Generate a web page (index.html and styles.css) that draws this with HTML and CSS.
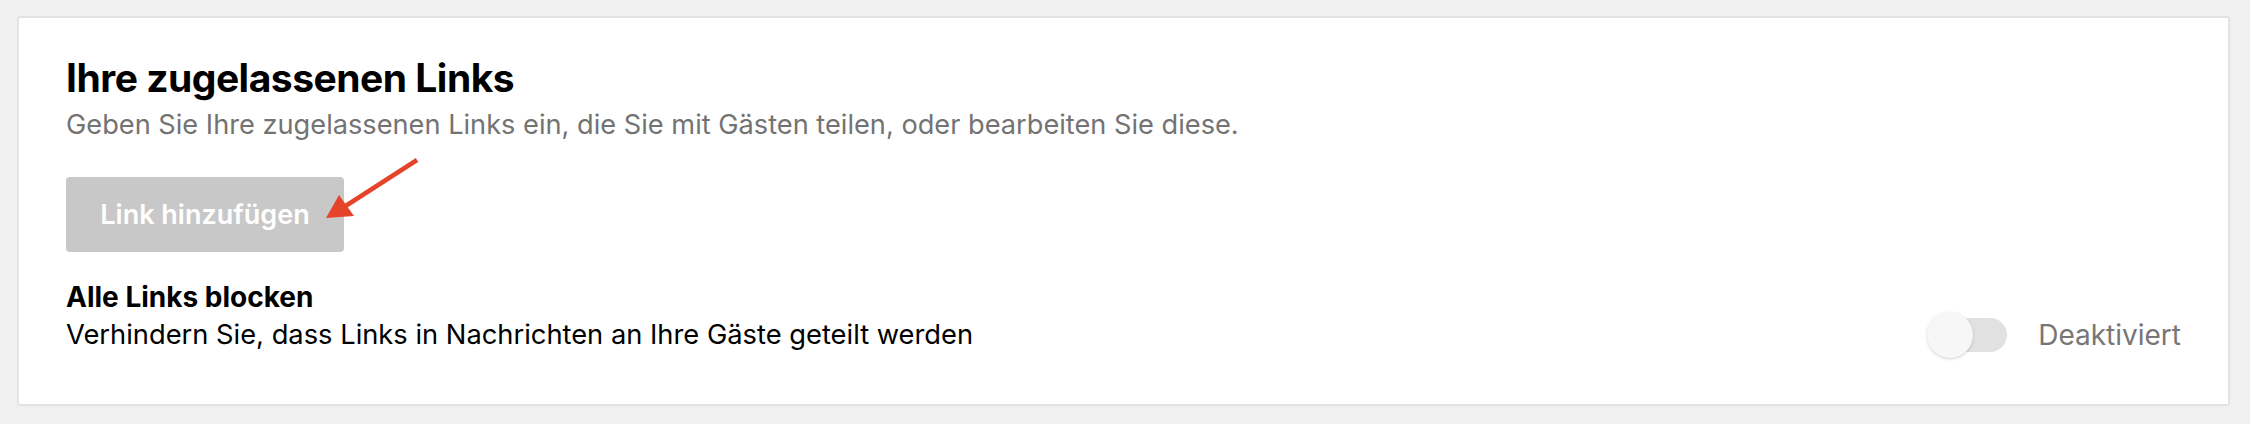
FILE: index.html
```html
<!DOCTYPE html>
<html lang="de">
<head>
    <meta charset="UTF-8">
    <meta name="viewport" content="width=device-width, initial-scale=1.0">
    <title>Zugelassene Links</title>
    <link rel="stylesheet" href="styles.css">
</head>
<body>
    <div class="card">
        <h1>Ihre zugelassenen Links</h1>
        <p class="subtitle">Geben Sie Ihre zugelassenen Links ein, die Sie mit Gästen teilen, oder bearbeiten Sie diese.</p>

        <div class="button-wrap">
            <button class="add-btn" disabled>Link hinzufügen</button>
            <svg class="arrow" width="100" height="68" viewBox="0 0 100 68">
                <line x1="95" y1="5" x2="22" y2="52" stroke="#e6432b" stroke-width="4.5" stroke-linecap="butt"/>
                <polygon points="4,63 17,40 32,61" fill="#e6432b"/>
            </svg>
        </div>

        <h2>Alle Links blocken</h2>
        <div class="setting-row">
            <p class="desc">Verhindern Sie, dass Links in Nachrichten an Ihre Gäste geteilt werden</p>
            <div class="toggle">
                <div class="switch">
                    <span class="track"></span>
                    <span class="knob"></span>
                </div>
                <span class="state">Deaktiviert</span>
            </div>
        </div>
    </div>
</body>
</html>
```

FILE: styles.css
```css
body {
    margin: 0;
    padding: 16px 20px 17px 17px;
    background-color: #f0f0f0;
    font-family: Inter, "Noto Sans", Arial, sans-serif;
    color: #000;
}
.card {
    background: #fff;
    border: 2px solid #e3e3e3;
    border-radius: 3px;
    padding: 36px 47px 50px 47px;
}
h1 {
    margin: 0;
    font-size: 39px;
    line-height: 48px;
    font-weight: 700;
    letter-spacing: -0.5px;
}
.subtitle {
    margin: 7px 0 0 0;
    font-size: 27.2px;
    line-height: 32px;
    color: #737373;
}
.button-wrap {
    position: relative;
    margin-top: 36px;
    width: 278px;
}
.add-btn {
    display: block;
    width: 278px;
    height: 75px;
    background: #c8c8c8;
    color: #fff;
    border: none;
    border-radius: 4px;
    font-family: inherit;
    font-size: 27px;
    font-weight: 600;
    padding: 0;
}
.arrow {
    position: absolute;
    left: 256px;
    top: -22px;
}
h2 {
    margin: 26px 0 0 0;
    font-size: 28px;
    line-height: 38px;
    font-weight: 700;
}
.setting-row {
    display: flex;
    justify-content: space-between;
    align-items: center;
}
.desc {
    margin: 0;
    font-size: 27.3px;
    line-height: 38px;
}
.toggle {
    display: flex;
    align-items: center;
    gap: 31px;
}
.switch {
    position: relative;
    width: 80px;
    height: 46px;
    margin: -4px 0;
}
.track {
    position: absolute;
    left: 8px;
    right: 0;
    top: 6px;
    height: 34px;
    border-radius: 17px;
    background: #e1e1e1;
}
.knob {
    position: absolute;
    left: 0;
    top: 0;
    width: 46px;
    height: 46px;
    border-radius: 50%;
    background: #f7f7f7;
    box-shadow: 0 1px 3px rgba(0, 0, 0, 0.18);
}
.state {
    font-size: 28px;
    line-height: 38px;
    color: #777;
}
```
